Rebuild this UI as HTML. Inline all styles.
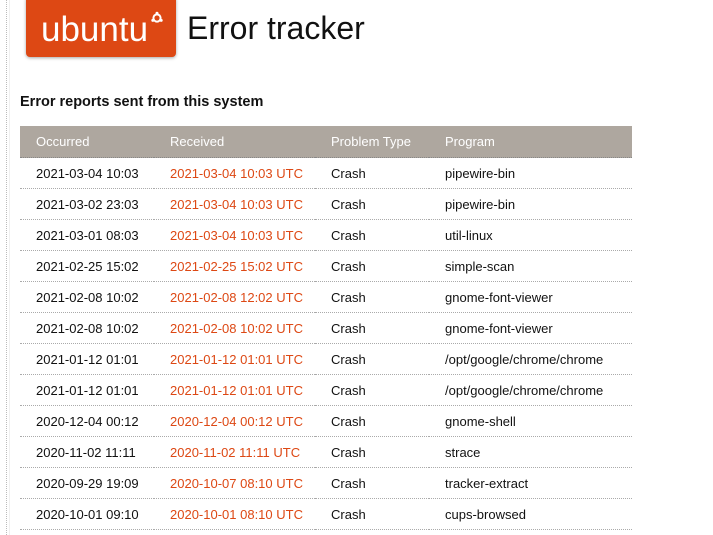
<!DOCTYPE html>
<html><head><style>
body{margin:0;width:713px;height:535px;overflow:hidden;background:#fff;font-family:"Liberation Sans",sans-serif;position:relative}
.vl{position:absolute;left:6px;top:0;height:535px;border-left:1px dotted #bbb}
.vl2{position:absolute;left:9px;top:0;height:535px;border-left:1px solid #f0f0f0}
.logo{position:absolute;left:26px;top:-4px;width:150px;height:61px;background:#dd4814;border-radius:4px;box-shadow:0 1px 3px rgba(0,0,0,.35)}
.logo span{position:absolute;left:15px;top:14px;color:#fff;font-size:35px;letter-spacing:0px}
.logo svg{position:absolute;left:124px;top:15px}
.title{position:absolute;left:187px;top:10px;font-size:32px;color:#111}
h2{position:absolute;left:20px;top:94px;margin:0;font-size:14.5px;font-weight:bold;color:#111}
table{position:absolute;left:20px;top:126px;width:612px;border-collapse:collapse;font-size:13px}
th{background:#aea79f;color:#fff;font-weight:normal;text-align:left;height:31px;padding:0 0 0 16px;border-bottom:1px dotted #888}
td{height:30px;padding:0 0 0 16px;border-bottom:1px dotted #aaa;color:#111}
td.r{color:#dd4814}
</style></head><body>
<div class="vl"></div><div class="vl2"></div>
<div class="logo"><span>ubuntu</span>
<svg width="14" height="14" viewBox="0 0 14 14"><circle cx="7" cy="7" r="4.6" fill="#fff"/><circle cx="7" cy="7" r="2.6" fill="#dd4814"/><circle cx="7" cy="2.2" r="1.5" fill="#fff"/><circle cx="2.8" cy="9.4" r="1.5" fill="#fff"/><circle cx="11.2" cy="9.4" r="1.5" fill="#fff"/></svg></div>
<div class="title">Error tracker</div>
<h2>Error reports sent from this system</h2>
<table>
<tr><th style="width:118px">Occurred</th><th style="width:145px">Received</th><th style="width:98px">Problem Type</th><th>Program</th></tr>
<tr><td>2021-03-04 10:03</td><td class="r">2021-03-04 10:03 UTC</td><td>Crash</td><td>pipewire-bin</td></tr>
<tr><td>2021-03-02 23:03</td><td class="r">2021-03-04 10:03 UTC</td><td>Crash</td><td>pipewire-bin</td></tr>
<tr><td>2021-03-01 08:03</td><td class="r">2021-03-04 10:03 UTC</td><td>Crash</td><td>util-linux</td></tr>
<tr><td>2021-02-25 15:02</td><td class="r">2021-02-25 15:02 UTC</td><td>Crash</td><td>simple-scan</td></tr>
<tr><td>2021-02-08 10:02</td><td class="r">2021-02-08 12:02 UTC</td><td>Crash</td><td>gnome-font-viewer</td></tr>
<tr><td>2021-02-08 10:02</td><td class="r">2021-02-08 10:02 UTC</td><td>Crash</td><td>gnome-font-viewer</td></tr>
<tr><td>2021-01-12 01:01</td><td class="r">2021-01-12 01:01 UTC</td><td>Crash</td><td>/opt/google/chrome/chrome</td></tr>
<tr><td>2021-01-12 01:01</td><td class="r">2021-01-12 01:01 UTC</td><td>Crash</td><td>/opt/google/chrome/chrome</td></tr>
<tr><td>2020-12-04 00:12</td><td class="r">2020-12-04 00:12 UTC</td><td>Crash</td><td>gnome-shell</td></tr>
<tr><td>2020-11-02 11:11</td><td class="r">2020-11-02 11:11 UTC</td><td>Crash</td><td>strace</td></tr>
<tr><td>2020-09-29 19:09</td><td class="r">2020-10-07 08:10 UTC</td><td>Crash</td><td>tracker-extract</td></tr>
<tr><td>2020-10-01 09:10</td><td class="r">2020-10-01 08:10 UTC</td><td>Crash</td><td>cups-browsed</td></tr>
</table>
</body></html>
